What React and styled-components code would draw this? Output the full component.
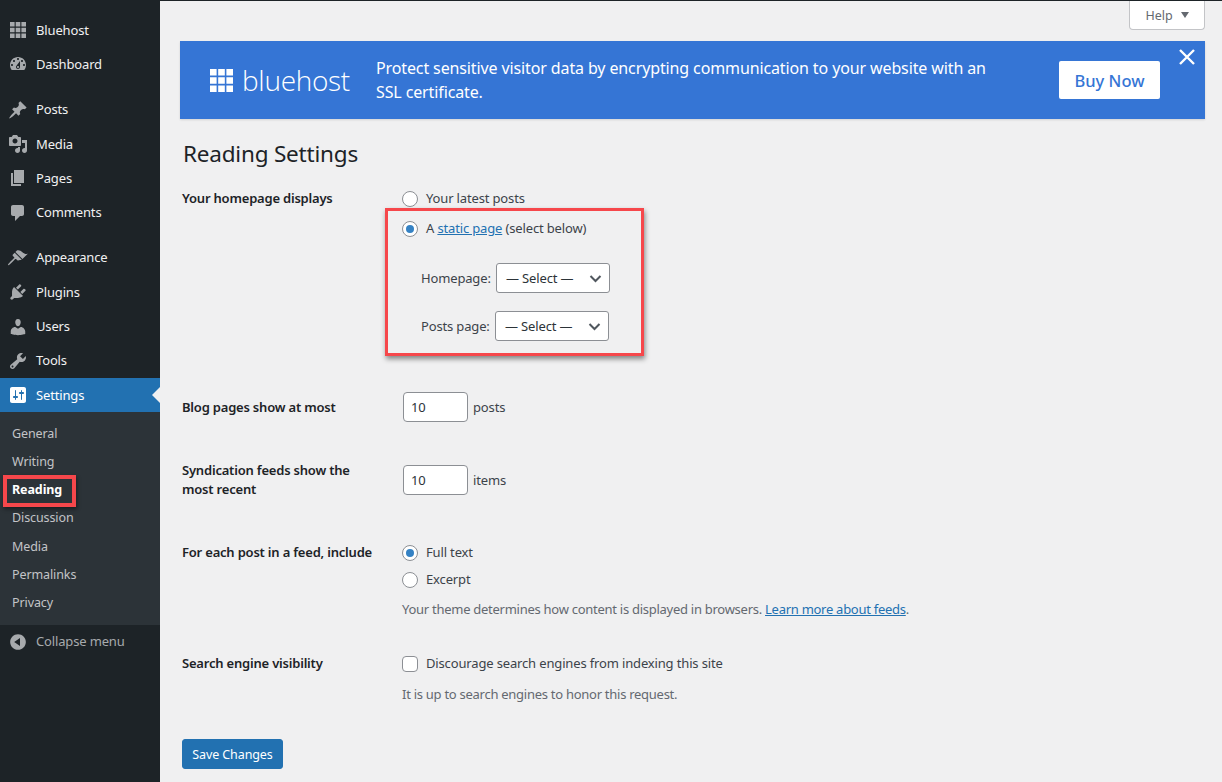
import React from "react";
import styled, { createGlobalStyle } from "styled-components";

const Global = createGlobalStyle`
  * { box-sizing: border-box; }
  html, body { margin: 0; padding: 0; height: 100%; background: #f0f0f1; overflow: hidden; }
  body { font-family: "Noto Sans", "Open Sans", sans-serif; font-size: 13px; line-height: 19px; color: #3c434a; }
`;

const ICONS = {
  dashboard: "M3.76 16h12.48c1.1-1.37 1.76-3.11 1.76-5 0-4.42-3.58-8-8-8s-8 3.58-8 8c0 1.89.66 3.63 1.76 5zM10 4c.55 0 1 .45 1 1s-.45 1-1 1-1-.45-1-1 .45-1 1-1zM6 6c.55 0 1 .45 1 1s-.45 1-1 1-1-.45-1-1 .45-1 1-1zm8 0c.55 0 1 .45 1 1s-.45 1-1 1-1-.45-1-1 .45-1 1-1zm-5.37 5.55L12 7v6c0 1.1-.9 2-2 2s-2-.9-2-2c0-.57.24-1.08.63-1.45zM4 10c.55 0 1 .45 1 1s-.45 1-1 1-1-.45-1-1 .45-1 1-1zm12 0c.55 0 1 .45 1 1s-.45 1-1 1-1-.45-1-1 .45-1 1-1zm-5 3c0-.55-.45-1-1-1s-1 .45-1 1 .45 1 1 1 1-.45 1-1z",
  posts: "M10.44 3.02l1.82-1.82 6.36 6.35-1.83 1.82c-1.05-.68-2.48-.57-3.41.36l-.75.75c-.92.93-1.04 2.35-.35 3.41l-1.83 1.82-2.41-2.41-2.8 2.79c-.42.42-3.38 2.71-3.8 2.29s1.86-3.39 2.28-3.81l2.79-2.79L4.1 9.36l1.83-1.82c1.05.69 2.48.57 3.4-.36l.75-.75c.93-.92 1.05-2.35.36-3.41z",
  media: "M13 11V4c0-.55-.45-1-1-1h-1.67L9 1H5L3.67 3H2c-.55 0-1 .45-1 1v7c0 .55.45 1 1 1h10c.55 0 1-.45 1-1zM7 4.5c1.38 0 2.5 1.12 2.5 2.5S8.38 9.5 7 9.5 4.5 8.38 4.5 7 5.62 4.5 7 4.5zM14 6h5v10.5c0 1.38-1.12 2.5-2.5 2.5S14 17.88 14 16.5s1.12-2.5 2.5-2.5c.17 0 .34.02.5.05V9h-3V6zm-4 8.05V13h2v3.5c0 1.38-1.12 2.5-2.5 2.5S7 17.88 7 16.5 8.12 14 9.5 14c.17 0 .34.02.5.05z",
  pages: "M6 15V2h10v13H6zm-1 1h8v2H3V5h2v11z",
  comments: "M5 2h9c1.1 0 2 .9 2 2v7c0 1.1-.9 2-2 2h-2l-5 5v-5H5c-1.1 0-2-.9-2-2V4c0-1.1.9-2 2-2z",
  appearance: "M14.48 11.06L7.41 3.99l1.5-1.5c.5-.56 2.3-.47 3.51.32 1.21.8 1.43 1.28 2.91 2.1 1.18.64 2.45 1.26 4.45.85zm-.71.71L6.7 4.7 4.93 6.47c-.39.39-.39 1.02 0 1.41l1.06 1.06c.39.39.39 1.03 0 1.42-.6.6-6.76 6.04-5.95 6.85.81.81 6.25-5.35 6.85-5.95.39-.39 1.03-.39 1.42 0l1.06 1.06c.39.39 1.02.39 1.41 0z",
  plugins: "M13.11 4.36L9.87 7.6 8 5.73l3.24-3.24c.35-.34 1.05-.2 1.56.32.52.51.66 1.21.31 1.55zm-8 1.77l.91-1.12 9.01 9.01-1.19.84c-.71.71-2.63 1.16-3.82 1.16H6.14L4.9 17.26c-.59.59-1.54.59-2.12 0-.59-.58-.59-1.53 0-2.12l1.24-1.24v-3.88c0-1.13.4-3.19 1.09-3.89zm7.26 3.97l3.24-3.24c.34-.35 1.04-.21 1.55.31.52.51.66 1.21.31 1.55l-3.24 3.25z",
  users: "M10 9.25c-2.27 0-2.73-3.44-2.73-3.44C7 4.02 7.82 2 9.97 2c2.16 0 2.98 2.02 2.71 3.81 0 0-.41 3.44-2.68 3.44zm0 2.57L12.72 10c2.39 0 4.52 2.33 4.52 4.53v2.49s-3.65 1.13-7.24 1.13c-3.65 0-7.24-1.13-7.24-1.13v-2.49c0-2.25 1.94-4.48 4.47-4.48z",
  tools: "M16.68 9.77c-1.34 1.34-3.3 1.67-4.95.99l-5.41 6.52c-.99.99-2.59.99-3.58 0s-.99-2.59 0-3.57l6.52-5.42c-.68-1.65-.35-3.61.99-4.95 1.28-1.28 3.12-1.62 4.72-1.06l-2.89 2.89 2.82 2.82 2.86-2.87c.53 1.58.18 3.39-1.08 4.65zM3.81 16.21c.4.39 1.04.39 1.43 0 .4-.4.4-1.04 0-1.43-.39-.4-1.03-.4-1.43 0-.39.39-.39 1.03 0 1.43z",
  settings: "M18 16V4c0-1.1-.9-2-2-2H4c-1.1 0-2 .9-2 2v12c0 1.1.9 2 2 2h12c1.1 0 2-.9 2-2zM8 11h1c.55 0 1 .45 1 1s-.45 1-1 1H8v1.5c0 .28-.22.5-.5.5s-.5-.22-.5-.5V13H6c-.55 0-1-.45-1-1s.45-1 1-1h1V5.5c0-.28.22-.5.5-.5s.5.22.5.5V11zm5-2h-1c-.55 0-1-.45-1-1s.45-1 1-1h1V5.5c0-.28.22-.5.5-.5s.5.22.5.5V7h1c.55 0 1 .45 1 1s-.45 1-1 1h-1v5.5c0 .28-.22.5-.5.5s-.5-.22-.5-.5V9z",
  collapse: "M10 2.16c4.33 0 7.84 3.51 7.84 7.84s-3.51 7.84-7.84 7.84S2.16 14.33 2.16 10 5.71 2.16 10 2.16zm2 11.72V6.12L6.18 9.97z",
  grid: "M2 2h4.6v4.6H2zM7.7 2h4.6v4.6H7.7zM13.4 2H18v4.6h-4.6zM2 7.7h4.6v4.6H2zM7.7 7.7h4.6v4.6H7.7zM13.4 7.7H18v4.6h-4.6zM2 13.4h4.6V18H2zM7.7 13.4h4.6V18H7.7zM13.4 13.4H18V18h-4.6z",
};

const Page = styled.div`
  display: flex;
  width: 1222px;
  height: 782px;
  overflow: hidden;
  border-top: 1px solid #1d2327;
`;

const Sidebar = styled.nav`
  width: 160px;
  flex: none;
  background: #1d2327;
  padding-top: 12px;
  display: flex;
  flex-direction: column;
`;

const MenuGroup = styled.div`
  margin-bottom: 11px;
`;

const MenuItem = styled.a`
  position: relative;
  display: flex;
  align-items: center;
  height: 34.3px;
  padding-left: 8px;
  gap: 8px;
  color: #f0f0f1;
  font-size: 13px;
  letter-spacing: -0.15px;
  background: ${(p) => (p.$active ? "#2271b1" : "transparent")};
  color: ${(p) => (p.$active ? "#fff" : "#f0f0f1")};
`;

const Arrow = styled.span`
  position: absolute;
  right: 0;
  top: 50%;
  margin-top: -8px;
  border: 8px solid transparent;
  border-right-color: #f0f0f1;
  border-left: 0;
`;

const MenuIcon = styled.svg`
  width: 20px;
  height: 20px;
  flex: none;
  fill: ${(p) => (p.$active ? "#fff" : "#a7aaad")};
`;

const Submenu = styled.div`
  background: #2c3338;
  padding: 7px 0 8px;
  display: flex;
  flex-direction: column;
`;

const SubItem = styled.a`
  position: relative;
  display: flex;
  align-items: center;
  height: 28.2px;
  padding-left: 12px;
  font-size: 12.5px;
  letter-spacing: -0.1px;
  color: ${(p) => (p.$current ? "#fff" : "#c3c4c7")};
  font-weight: ${(p) => (p.$current ? 700 : 400)};
`;

const ReadingMark = styled.span`
  position: absolute;
  left: 3px;
  top: -1px;
  width: 73px;
  height: 32px;
  border: 4px solid #f6474b;
  box-shadow: 1px 2px 4px rgba(0, 0, 0, 0.45);
`;

const CollapseRow = styled.a`
  display: flex;
  align-items: center;
  height: 34px;
  padding-left: 8px;
  gap: 8px;
  color: #a7aaad;
  font-size: 13px;
  letter-spacing: -0.15px;
`;

const CollapseIcon = styled.svg`
  width: 20px;
  height: 20px;
  fill: #a7aaad;
`;

const Main = styled.main`
  flex: 1;
  min-width: 0;
  padding: 0 17px 0 20px;
`;

const HelpBar = styled.div`
  display: flex;
  justify-content: flex-end;
`;

const HelpTab = styled.button`
  width: 76px;
  height: 29px;
  background: #fff;
  border: 1px solid #c3c4c7;
  border-top: 0;
  border-radius: 0 0 4px 4px;
  font: inherit;
  font-size: 12.5px;
  color: #646970;
  display: flex;
  align-items: center;
  justify-content: center;
  gap: 8px;
  padding: 0;
`;

const Caret = styled.span`
  border-style: solid;
  border-width: 6px 4px 0;
  border-color: #646970 transparent transparent;
`;

const Banner = styled.section`
  position: relative;
  margin-top: 11px;
  height: 78px;
  background: #3575d5;
  box-shadow: 0 1px 2px rgba(0, 0, 0, 0.12);
  display: flex;
  align-items: center;
  padding-left: 30px;
  color: #fff;
`;

const Logo = styled.div`
  display: flex;
  align-items: center;
  gap: 9px;
  width: 166px;
  flex: none;
`;

const LogoGrid = styled.svg`
  width: 23px;
  height: 23px;
  fill: #fff;
  flex: none;
`;

const LogoText = styled.span`
  font-family: "Open Sans", sans-serif;
  font-weight: 300;
  font-size: 28px;
  line-height: 34px;
  letter-spacing: -0.3px;
`;

const BannerText = styled.p`
  margin: 0;
  width: 620px;
  font-size: 16px;
  line-height: 24px;
  letter-spacing: -0.12px;
  flex: none;
`;

const BuyNow = styled.button`
  margin-left: 63px;
  width: 101px;
  height: 38px;
  background: #fff;
  color: #3575d5;
  border: 0;
  border-radius: 2px;
  font: inherit;
  font-size: 16.5px;
  font-weight: 500;
  flex: none;
`;

const Close = styled.svg`
  position: absolute;
  right: 10px;
  top: 8px;
  width: 16px;
  height: 16px;
  stroke: #fff;
  stroke-width: 2.4;
`;

const Title = styled.h1`
  margin: 20px 0 0 3px;
  font-size: 22.5px;
  line-height: 30px;
  font-weight: 400;
  color: #1d2327;
  letter-spacing: -0.2px;
`;

const Form = styled.form`
  padding-left: 2px;
`;

const Row = styled.div`
  display: grid;
  grid-template-columns: 220px 1fr;
  margin-top: ${(p) => p.$top}px;
  align-items: ${(p) => (p.$center ? "center" : "start")};
`;

const RowLabel = styled.div`
  font-size: 13px;
  font-weight: 600;
  color: #1d2327;
  letter-spacing: -0.2px;
  line-height: 19px;
`;

const Field = styled.div`
  display: flex;
  flex-direction: column;
`;

const Option = styled.label`
  display: flex;
  align-items: center;
  gap: 8px;
  height: 19px;
  margin-top: ${(p) => p.$top || 0}px;
  letter-spacing: -0.15px;
`;

const Radio = styled.span`
  width: 16px;
  height: 16px;
  flex: none;
  border-radius: 50%;
  border: 1px solid #8c8f94;
  background: #fff;
  display: flex;
  align-items: center;
  justify-content: center;
  &::after {
    content: "";
    display: ${(p) => (p.$on ? "block" : "none")};
    width: 8px;
    height: 8px;
    border-radius: 50%;
    background: #3582c4;
  }
`;

const Checkbox = styled.span`
  width: 16px;
  height: 16px;
  flex: none;
  border-radius: 4px;
  border: 1px solid #8c8f94;
  background: #fff;
`;

const Link = styled.a`
  color: #2271b1;
  text-decoration: underline;
`;

const StaticGroup = styled.div`
  position: relative;
  margin-top: 11px;
`;

const StaticMark = styled.div`
  position: absolute;
  left: -17px;
  top: -11px;
  width: 259px;
  height: 148px;
  border: 3px solid #f6474b;
  box-shadow: 1px 3px 5px rgba(0, 0, 0, 0.45);
  pointer-events: none;
`;

const SelectRow = styled.div`
  display: flex;
  align-items: center;
  height: 30px;
  padding-left: 19px;
  margin-top: ${(p) => p.$top}px;
`;

const SelectLabel = styled.span`
  width: ${(p) => p.$w}px;
  flex: none;
  letter-spacing: -0.15px;
  white-space: nowrap;
`;

const SelectBox = styled.div`
  width: 114px;
  height: 30px;
  border: 1px solid #8c8f94;
  border-radius: 3px;
  background: #fff;
  display: flex;
  align-items: center;
  justify-content: space-between;
  padding: 0 7px 0 9px;
  letter-spacing: -0.15px;
  color: #2c3338;
`;

const Chevron = styled.svg`
  width: 13px;
  height: 13px;
  fill: none;
  stroke: #50575e;
  stroke-width: 2;
`;

const InputRow = styled.div`
  display: flex;
  align-items: center;
  gap: 5px;
  margin-left: 1px;
  letter-spacing: -0.15px;
`;

const NumberBox = styled.div`
  width: 65px;
  height: 30px;
  border: 1px solid #8c8f94;
  border-radius: 4px;
  background: #fff;
  display: flex;
  align-items: center;
  padding-left: 7px;
  color: #2c3338;
`;

const Description = styled.p`
  margin: ${(p) => p.$top}px 0 0;
  color: #646970;
  font-size: 13px;
  letter-spacing: -0.27px;
  white-space: nowrap;
`;

const Save = styled.button`
  display: block;
  margin-top: ${(p) => p.$top}px;
  width: 101px;
  height: 30px;
  background: #2271b1;
  color: #fff;
  border: 1px solid #2271b1;
  border-radius: 3px;
  font: inherit;
  font-size: 12.5px;
  letter-spacing: -0.1px;
  padding: 0;
`;

const Icon = ({ name, active }) => (
  <MenuIcon viewBox="0 0 20 20" $active={active}>
    <path d={ICONS[name]} />
  </MenuIcon>
);

const Item = ({ icon, label }) => (
  <MenuItem>
    <Icon name={icon} />
    {label}
  </MenuItem>
);

const Pick = ({ label, w, top }) => (
  <SelectRow $top={top}>
    <SelectLabel $w={w}>{label}</SelectLabel>
    <SelectBox>
      — Select —
      <Chevron viewBox="0 0 13 13">
        <path d="M1.5 4l5 5 5-5" />
      </Chevron>
    </SelectBox>
  </SelectRow>
);

export default function App() {
  return (
    <Page>
      <Global />
      <Sidebar>
        <MenuGroup>
          <Item icon="grid" label="Bluehost" />
          <Item icon="dashboard" label="Dashboard" />
        </MenuGroup>
        <MenuGroup>
          <Item icon="posts" label="Posts" />
          <Item icon="media" label="Media" />
          <Item icon="pages" label="Pages" />
          <Item icon="comments" label="Comments" />
        </MenuGroup>
        <div>
          <Item icon="appearance" label="Appearance" />
          <Item icon="plugins" label="Plugins" />
          <Item icon="users" label="Users" />
          <Item icon="tools" label="Tools" />
          <MenuItem $active>
            <Icon name="settings" active />
            Settings
            <Arrow />
          </MenuItem>
        </div>
        <Submenu>
          <SubItem>General</SubItem>
          <SubItem>Writing</SubItem>
          <SubItem $current>
            Reading
            <ReadingMark />
          </SubItem>
          <SubItem>Discussion</SubItem>
          <SubItem>Media</SubItem>
          <SubItem>Permalinks</SubItem>
          <SubItem>Privacy</SubItem>
        </Submenu>
        <CollapseRow>
          <CollapseIcon viewBox="0 0 20 20">
            <path d={ICONS.collapse} />
          </CollapseIcon>
          Collapse menu
        </CollapseRow>
      </Sidebar>
      <Main>
        <HelpBar>
          <HelpTab>
            Help <Caret />
          </HelpTab>
        </HelpBar>
        <Banner>
          <Logo>
            <LogoGrid viewBox="2 2 16 16">
              <path d={ICONS.grid} />
            </LogoGrid>
            <LogoText>bluehost</LogoText>
          </Logo>
          <BannerText>
            Protect sensitive visitor data by encrypting communication to your website with an SSL certificate.
          </BannerText>
          <BuyNow>Buy Now</BuyNow>
          <Close viewBox="0 0 16 16">
            <path d="M1 1l14 14M15 1L1 15" />
          </Close>
        </Banner>
        <Title>Reading Settings</Title>
        <Form>
          <Row $top={20}>
            <RowLabel>Your homepage displays</RowLabel>
            <Field>
              <Option>
                <Radio />
                Your latest posts
              </Option>
              <StaticGroup>
                <Option>
                  <Radio $on />
                  <span>
                    A <Link>static page</Link> (select below)
                  </span>
                </Option>
                <Pick label="Homepage:" w={75} top={25} />
                <Pick label="Posts page:" w={74} top={18} />
                <StaticMark />
              </StaticGroup>
            </Field>
          </Row>
          <Row $top={51} $center>
            <RowLabel>Blog pages show at most</RowLabel>
            <InputRow>
              <NumberBox>10</NumberBox>
              posts
            </InputRow>
          </Row>
          <Row $top={39} $center>
            <RowLabel>
              Syndication feeds show the
              <br />
              most recent
            </RowLabel>
            <InputRow>
              <NumberBox>10</NumberBox>
              items
            </InputRow>
          </Row>
          <Row $top={44}>
            <RowLabel>For each post in a feed, include</RowLabel>
            <Field>
              <Option>
                <Radio $on />
                Full text
              </Option>
              <Option $top={8}>
                <Radio />
                Excerpt
              </Option>
              <Description $top={11}>
                Your theme determines how content is displayed in browsers. <Link>Learn more about feeds</Link>.
              </Description>
            </Field>
          </Row>
          <Row $top={35}>
            <RowLabel>Search engine visibility</RowLabel>
            <Field>
              <Option>
                <Checkbox />
                Discourage search engines from indexing this site
              </Option>
              <Description $top={12}>It is up to search engines to honor this request.</Description>
            </Field>
          </Row>
          <Save $top={35}>Save Changes</Save>
        </Form>
      </Main>
    </Page>
  );
}
